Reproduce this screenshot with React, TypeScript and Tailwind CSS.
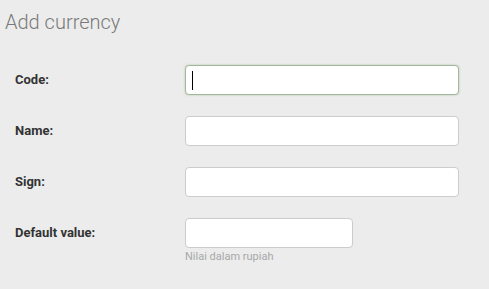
import React from "react";

const fields = [
  { id: "code", label: "Code:", focused: true, wide: true },
  { id: "name", label: "Name:", wide: true },
  { id: "sign", label: "Sign:", wide: true },
  { id: "default", label: "Default value:", wide: false, help: "Nilai dalam rupiah" },
];

export default function App() {
  return (
    <div className="w-[489px] h-[289px] bg-[#ececec] font-['Roboto',sans-serif] overflow-hidden">
      <h1 className="pl-[5px] pt-[8px] text-[20px] leading-[28px] font-light text-[#7a7a7a]">
        Add currency
      </h1>

      <div className="mt-[29px] flex flex-col gap-[21px]">
        {fields.map((f) => (
          <div key={f.id} className="flex items-start">
            <label className="w-[185px] pl-[15px] h-[30px] flex items-center text-[13px] font-bold text-[#333]">
              {f.label}
            </label>
            <div className="flex flex-col">
              <div
                className={`h-[30px] rounded-[4px] bg-white border flex items-center pl-[6px] ${
                  f.wide ? "w-[274px]" : "w-[168px]"
                } ${
                  f.focused
                    ? "border-[#a3b898] shadow-[0_0_2px_rgba(120,150,100,0.5)]"
                    : "border-[#cccccc]"
                }`}
              >
                {f.focused && <span className="w-px h-[19px] bg-black" />}
              </div>
              {f.help && (
                <span className="mt-[2px] text-[11px] leading-[14px] text-[#a8a8a8]">
                  {f.help}
                </span>
              )}
            </div>
          </div>
        ))}
      </div>
    </div>
  );
}
